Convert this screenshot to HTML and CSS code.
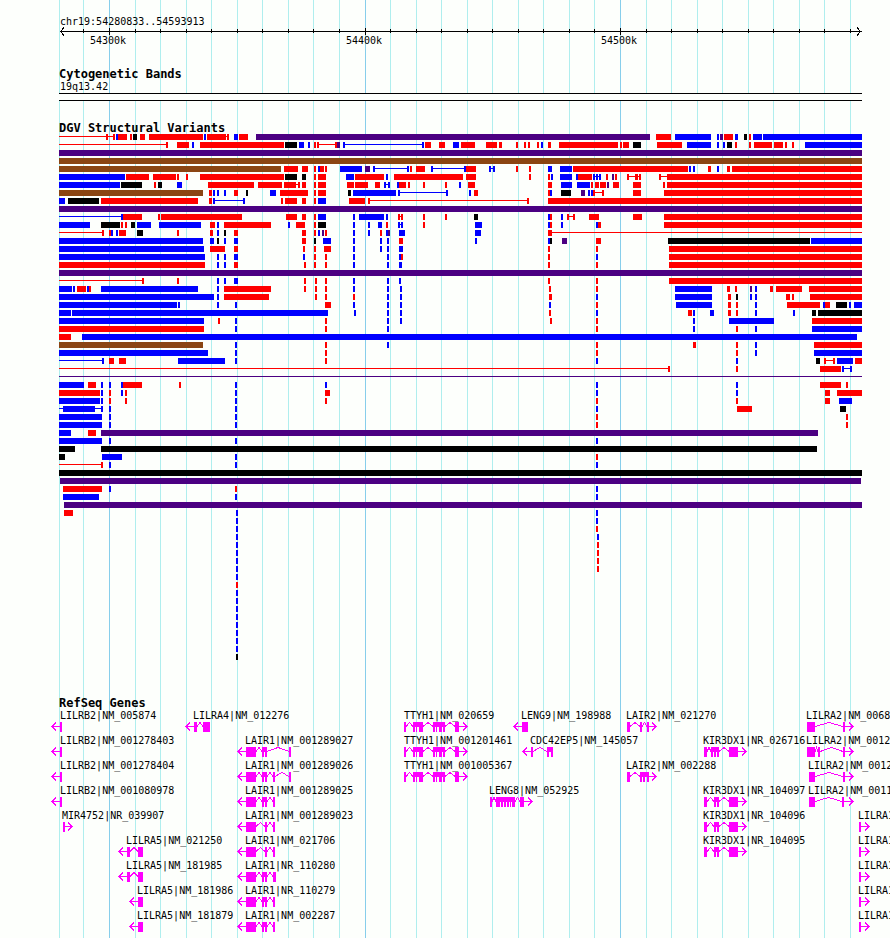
FILE: index.html
```html
<!DOCTYPE html>
<html lang="en">
<head>
    <meta charset="UTF-8">
    <meta name="viewport" content="width=device-width, initial-scale=1.0">
    <title>chr19:54280833..54593913</title>
    <link rel="stylesheet" href="styles.css">
</head>
<body>
    <main class="browser">
        <svg id="grid" class="grid" viewBox="0 0 890 10" preserveAspectRatio="none" aria-hidden="true"></svg>

        <section class="track">
            <svg id="ruler" class="plot" viewBox="0 0 890 68" role="img" aria-label="Position ruler">
                <text x="60" y="25">chr19:54280833..54593913</text>
                <rect class="black" x="60" y="31" width="802" height="1"/>
                <path class="arrow" d="M64 27.5L60.5 31.5L64 35.5M857 27.5L860.5 31.5L857 35.5"/>
                <text x="90" y="44">54300k</text>
                <text x="346" y="44">54400k</text>
                <text x="601" y="44">54500k</text>
            </svg>
        </section>

        <section class="track">
            <h2>Cytogenetic Bands</h2>
            <svg class="plot" viewBox="0 0 890 42" role="img" aria-label="Cytogenetic band 19q13.42">
                <text x="60" y="10">19q13.42</text>
                <rect class="band" x="59" y="13" width="803" height="8"/>
                <rect class="black" x="59" y="13" width="803" height="1"/>
                <rect class="black" x="59" y="20" width="803" height="1"/>
            </svg>
        </section>

        <section class="track">
            <h2>DGV Structural Variants</h2>
            <svg id="variants" class="plot" viewBox="0 0 890 563" role="img" aria-label="Structural variants"></svg>
        </section>

        <section class="track">
            <h2>RefSeq Genes</h2>
            <svg id="genes" class="plot" viewBox="0 0 890 229" role="img" aria-label="RefSeq genes"></svg>
        </section>
    </main>
    <script src="script.js"></script>
</body>
</html>
```

FILE: styles.css
```css
body {
    margin: 0;
    background-color: #fdfffc;
    color: #000;
    font-family: "DejaVu Sans Mono", "Liberation Mono", monospace;
}
.browser {
    position: relative;
    overflow: hidden;
}
.grid {
    position: absolute;
    top: 0;
    left: 0;
    width: 100%;
    height: 100%;
    z-index: -1;
}
.track h2 {
    margin: 0;
    padding-left: calc(100% * 59 / 890);
    font-size: 12px;
    line-height: 12px;
    font-weight: bold;
}
.plot {
    display: block;
    width: 100%;
    height: auto;
}
.plot text {
    font-size: 10px;
    fill: #000;
}
rect,
path {
    shape-rendering: crispEdges;
}
.minor { fill: #afeeee; }
.major { fill: #87ceeb; }
.band { fill: #fdfffc; }
.black { fill: #000; }
.blue { fill: #00f; }
.red { fill: #f00; }
.indigo { fill: #4b0082; }
.brown { fill: #8b4513; }
.gene { fill: #f0f; }
.arrow,
.intron {
    fill: none;
    stroke: #000;
    stroke-width: 1;
}
.intron { stroke: #f0f; }
```

FILE: script.js
```js
const NS = 'http://www.w3.org/2000/svg';
const LEFT = 59;

function add(parent, tag, attrs, text) {
    const el = document.createElementNS(NS, tag);
    for (const key in attrs) el.setAttribute(key, attrs[key]);
    if (text) el.textContent = text;
    parent.appendChild(el);
    return el;
}

function rect(parent, cls, x, y, width, height) {
    add(parent, 'rect', { class: cls, x, y, width, height });
}

// Grid lines, every 10k with a stronger one every 100k
const gridLines = [59, 83, 109, 135, 160, 186, 211, 237, 262, 288, 313, 339, 365, 390, 416, 441,
    467, 492, 518, 543, 569, 594, 620, 646, 671, 697, 722, 748, 773, 799, 824, 850];
const majorLines = [109, 365, 620];
const grid = document.getElementById('grid');
const ruler = document.getElementById('ruler');

gridLines.forEach(x => {
    const major = majorLines.includes(x);
    rect(grid, major ? 'major' : 'minor', x, 0, 1, 10);
    if (x === LEFT) return;
    if (major) rect(ruler, 'black', x, 28, 1, 7);
    else rect(ruler, 'black', x, 29, 1, 4);
});

// One string per row. "b59-72" is a bar, "b~59-72" a thin line, "b235" a short tick.
const colors = { b: 'blue', r: 'red', k: 'black', p: 'indigo', s: 'brown' };
const variantRows = [
    'r~59-113 r106 r113 b116 r118-127 r130 k133-137 r140-145 r149-203 b204 r207-226 r~226-229 r227 b234-238 r239-248 p256-650 r656-671 b675-711 b717 p720-723 r724-733 b735-738 k744-747 r749 b753-762 b763-862',
    'r~59-166 r166 r177-189 b192 r200-284 k285-297 b299-304 b308 r314 r317 r~319-335 r335 p337-340 b343 b~345-422 b422 r425-431 r439-445 b453-459 r461-475 r486-497 r499-502 r516 r524 r528 r537 b541 r548-551 r559-618 r620 r623-629 k633-641 r657-682 b687-711 b717 b723 k727-732 r735 r749 r754-772 r774-783 r785 r792 b805-862',
    'p59-862',
    's59-862',
    's59-281 r284-298 r302-308 r314 b318 r320-324 r325 b340-362 p365-370 b373 b~375-407 b407 r410 r416-425 b431 b~433-464 b464 r466-476 b489 b~491-493 b493 r516 r529 b548-552 b560-572 r573-688 b689 b693 r708-711 b717 r727-730 r732-862',
    'b59-125 r126-149 r153-176 r177 r186 r200-284 k285-297 k302-306 r314 r318-326 b346-354 r355-384 b386 r394-463 r466-476 r529 r548 b551 b560-572 b576 r578-592 b593 b~595-599 b596 b599 r606 p612 r615 r627 r~629-639 r635-638 r639 r659 r~661-667 r667-862',
    'b59-120 k121-142 r154 k158-162 b177-182 r208-254 r258-282 r284-296 r~296-298 r298 r302-306 r314 r318-326 r347-354 r355-368 r375-380 b384 b~386-388 b388 b397 r399-406 r408 r423 r445 b459 r468-475 r548-552 b561-572 b577-590 r591 r595-599 r600-606 p607 r613-619 r633-641 r663 r667-862',
    's59-203 r209-212 b213 b217 b224 r234-238 k246 b270-276 r280-308 r314 r318-326 k348-351 b353-396 b398 b~400-446 b446 b469 r474-478 r548 b550 k561-571 p581-585 b588 b591 r593 r~595-602 r602 r633-641 r664-862',
    'b59-65 k68-99 r101-198 r209-212 b213 b~215-243 b243 r281 r285-297 r302-306 r314 b318-326 r349-365 r368 r~370-527 r527 r548-862',
    'p59-862',
    'b~59-121 b121 r123-142 r158 r161-242 r286-297 r302-306 r314 b318-326 b353 b359-384 b386 r398 r~400-401 r401 r423 r445 k474-478 b548 r550 b561 r567 r~569-573 r573 r589-599 r633-642 r664-862',
    'b59-90 k101-120 r121 r125 k131-135 b137-151 b159-201 r210-215 b217 r224-271 b288 r296-305 r314 k318-326 b353 b368 b378-382 r386 b398 b~400-401 b401 r423 b475-482 b548 r550 b561 b596 r598-601 r664-862',
    'r~59-102 r102 r109 b111 b116 r119-126 k137-143 r177 r210-213 b217 k224 r234-238 r302-306 r314 b318 p322 r325 b353 b368 r380 b386 p388 b399-405 b475-481 r548-552 r~552-862',
    'b59-203 b210-214 k217 b224 b234-238 r302-306 k314 b323-331 b353 b380 b387 r399-403 b475 b548 k550 p562-567 r596-601 k668-810 b811-862',
    'b59-204 r210-225 r234-238 r303 r314 r324-331 b353 b380 b387 b399-403 r548 r596 r669-862',
    'b59-205 b217 b224 b234-238 b303 r314 r325 b353 b387 b399 r401 r548 b596 r669-862',
    'r59-205 b217 b224 r234-238 r304 r314 r325 b353 b387 b399-402 r548 r596 r669-862',
    'p59-862',
    'r~59-142 r142 r177 b217 b224 b234-238 r304 r315 r325 b353 b387 b399 r548 r596 r669-862',
    'b59-72 b73 r77-86 b87 r89 b101-198 b217 r224-271 r304 r315 r325 b353 b387 b400 r549 r596 b675-712 r727-730 r735 p750 b755 r770-773 r776-802 r809-862',
    'b59-214 b217 r224-269 r315 r325 r353 b387 b400 r549-552 b596 b675-712 r728-731 k736 b750 b755 r786-790 r792 r810-862',
    'b59-177 b178 b217 b235 r325-331 b353 b387 b400 b549 r596 b676-712 r728-731 r736 b755 r787-820 b823 r825-830 k836-847 b849 b854-862',
    'b59-71 b72-328 b354 b387 b400 r549 b596 r688-692 b693 b710-714 r728-731 r736 b755 b793 k812-816 k818-862',
    'b59-204 r218 b235 r325 b387 b400 r550 r596 b693 b729-774 r812-862',
    'r59-204 b235 r325 b387 r596 b693 r736 b755 b812-862',
    'r59-71 b82-857',
    's59-203 b235 r325 b387 r596 r693-696 r736 b755 r814-862',
    'b59-208 b235 r325 r596 r736 b755 b814-862',
    'b~59-102 b102 r109-114 r119-126 b178-225 b235 r325 b596 b736 k816-820 r824 r~826-833 r833 b837-853 r855-862',
    'r~59-668 r668 r736 r820-841 b842 b~844-850 b850',
    'p~59-862',
    'b59-84 r88-96 b101 b109 b121 r123-142 r179 b235 b325 b596 b736 r820-841 r846',
    'r59-100 b101 r109 b121 r125 b235 r325-330 b596 b736 r825-830 r837-862',
    'b59-100 b101 r109 r125 b235 r325 r596 r736 r825-830 b839-852',
    'b~59-101 b63-95 b101 b109 b235 b596 r737-752 k840-846',
    'b59-102 b109 b235 r596 r846',
    'b59-102 b109 b235 r596 r846',
    'b59-71 r88-96 p101-818',
    'b59-102 b109 b235 b596',
    'k59-75 k101-817',
    'k59-65 b102-122 b235 r596',
    'r~59-101 r101 b109 b235 b596',
    'k59-862',
    'p60-861',
    'r63-102 b109 r235 b596',
    'b63-99 b235 b596',
    'p64-862',
    'r64-73 b236 b596',
    'b236 b596',
    'b236 r596',
    'b236 b597',
    'b236 r597',
    'b236 r597',
    'b236 r597',
    'b236 r597',
    'b236',
    'r236',
    'b236',
    'b236',
    'b236',
    'b236',
    'b236',
    'b236',
    'b236',
    'b236',
    'k236'
];

const variants = document.getElementById('variants');
variantRows.forEach((row, i) => {
    const y = i * 8;
    row.split(' ').forEach(item => {
        const thin = item[1] === '~';
        const [start, end] = item.slice(thin ? 2 : 1).split('-').map(Number);
        const width = end ? end - start : 2;
        rect(variants, colors[item[0]], start, thin ? y + 2 : y, width, thin ? 1 : 6);
    });
});

// [row, label x, label, exons, arrow tip x]
const lair3 = [[246, 256], [262, 264], [265, 267], [273, 275]];
const lair2 = [[246, 256], [265, 267], [273, 275]];
const ttyh = [[404, 406], [413, 415], [416, 417], [419, 423], [433, 435], [436, 437], [439, 442], [443, 445], [455, 459]];
const kir = [[704, 707], [714, 716], [717, 719], [729, 738]];
const geneList = [
    [0, 60, 'LILRB2|NM_005874', [[60, 62]], 52],
    [1, 60, 'LILRB2|NM_001278403', [[60, 62]], 52],
    [2, 60, 'LILRB2|NM_001278404', [[60, 62]], 52],
    [3, 60, 'LILRB2|NM_001080978', [[60, 62]], 52],
    [4, 62, 'MIR4752|NR_039907', [[63, 65]], 72],
    [0, 193, 'LILRA4|NM_012276', [[194, 197], [203, 210]], 186],
    [5, 126, 'LILRA5|NM_021250', [[127, 130], [138, 143]], 119],
    [6, 126, 'LILRA5|NM_181985', [[127, 130], [138, 143]], 119],
    [7, 137, 'LILRA5|NM_181986', [[138, 143]], 130],
    [8, 137, 'LILRA5|NM_181879', [[138, 143]], 130],
    [1, 245, 'LAIR1|NM_001289027', [[246, 256], [262, 264], [265, 267], [289, 291]], 238],
    [2, 245, 'LAIR1|NM_001289026', [[246, 256], [262, 264], [265, 267], [273, 275], [289, 291]], 238],
    [3, 245, 'LAIR1|NM_001289025', lair3, 238],
    [4, 245, 'LAIR1|NM_001289023', lair2, 238],
    [5, 245, 'LAIR1|NM_021706', lair2, 238],
    [6, 245, 'LAIR1|NR_110280', [[246, 256], [262, 264], [265, 267], [273, 276]], 238],
    [7, 245, 'LAIR1|NR_110279', lair3, 238],
    [8, 245, 'LAIR1|NM_002287', lair3, 238],
    [0, 404, 'TTYH1|NM_020659', ttyh, 467],
    [1, 404, 'TTYH1|NM_001201461', ttyh, 467],
    [2, 404, 'TTYH1|NM_001005367', ttyh, 467],
    [0, 521, 'LENG9|NM_198988', [[522, 528]], 514],
    [1, 530, 'CDC42EP5|NM_145057', [[531, 533], [547, 549], [551, 553]], 523],
    [3, 489, 'LENG8|NM_052925', [[490, 492], [496, 500], [501, 503], [504, 506], [507, 509], [510, 511], [512, 515], [520, 524]], 532],
    [0, 626, 'LAIR2|NM_021270', [[627, 630], [640, 642], [647, 649]], 656],
    [2, 626, 'LAIR2|NM_002288', [[627, 630], [640, 642], [643, 645], [647, 649]], 656],
    [1, 703, 'KIR3DX1|NR_026716', [[704, 707], [711, 713], [714, 716], [717, 719], [729, 738]], 746],
    [3, 703, 'KIR3DX1|NR_104097', kir, 746],
    [4, 703, 'KIR3DX1|NR_104096', kir, 746],
    [5, 703, 'KIR3DX1|NR_104095', kir, 746],
    [0, 806, 'LILRA2|NM_0068', [[807, 815], [843, 845]], 853],
    [1, 806, 'LILRA2|NM_0012', [[807, 815], [818, 820], [843, 845]], 853],
    [2, 808, 'LILRA2|NM_0012', [[809, 815], [843, 845]], 853],
    [3, 808, 'LILRA2|NM_0011', [[809, 815], [842, 844]], 853],
    [4, 858, 'LILRA1', [[859, 861]], 869],
    [5, 858, 'LILRA1', [[859, 861]], 869],
    [6, 858, 'LILRA1', [[859, 861]], 869],
    [7, 858, 'LILRA1', [[859, 861]], 869],
    [8, 858, 'LILRA1', [[859, 861]], 869]
];

const genes = document.getElementById('genes');
geneList.forEach(([row, labelX, label, exons, tip]) => {
    const y = row * 25 + 13;
    const mid = y + 4.5;
    const first = exons[0][0];
    const last = exons[exons.length - 1][1];
    add(genes, 'text', { x: labelX, y: y - 3 }, label);

    // introns are drawn as a hat between two exons
    let d = '';
    exons.forEach(([start, end], i) => {
        rect(genes, 'gene', start, y, end - start, 10);
        const next = exons[i + 1];
        if (next) d += `M${end} ${mid}L${(end + next[0]) / 2} ${y + 0.5}L${next[0]} ${mid}`;
    });

    // strand arrow
    if (tip < first) d += `M${first} ${mid}H${tip}M${tip + 4} ${mid - 4}L${tip} ${mid}L${tip + 4} ${mid + 4}`;
    else d += `M${last} ${mid}H${tip}M${tip - 4} ${mid - 4}L${tip} ${mid}L${tip - 4} ${mid + 4}`;
    add(genes, 'path', { class: 'intron', d });
});
```
